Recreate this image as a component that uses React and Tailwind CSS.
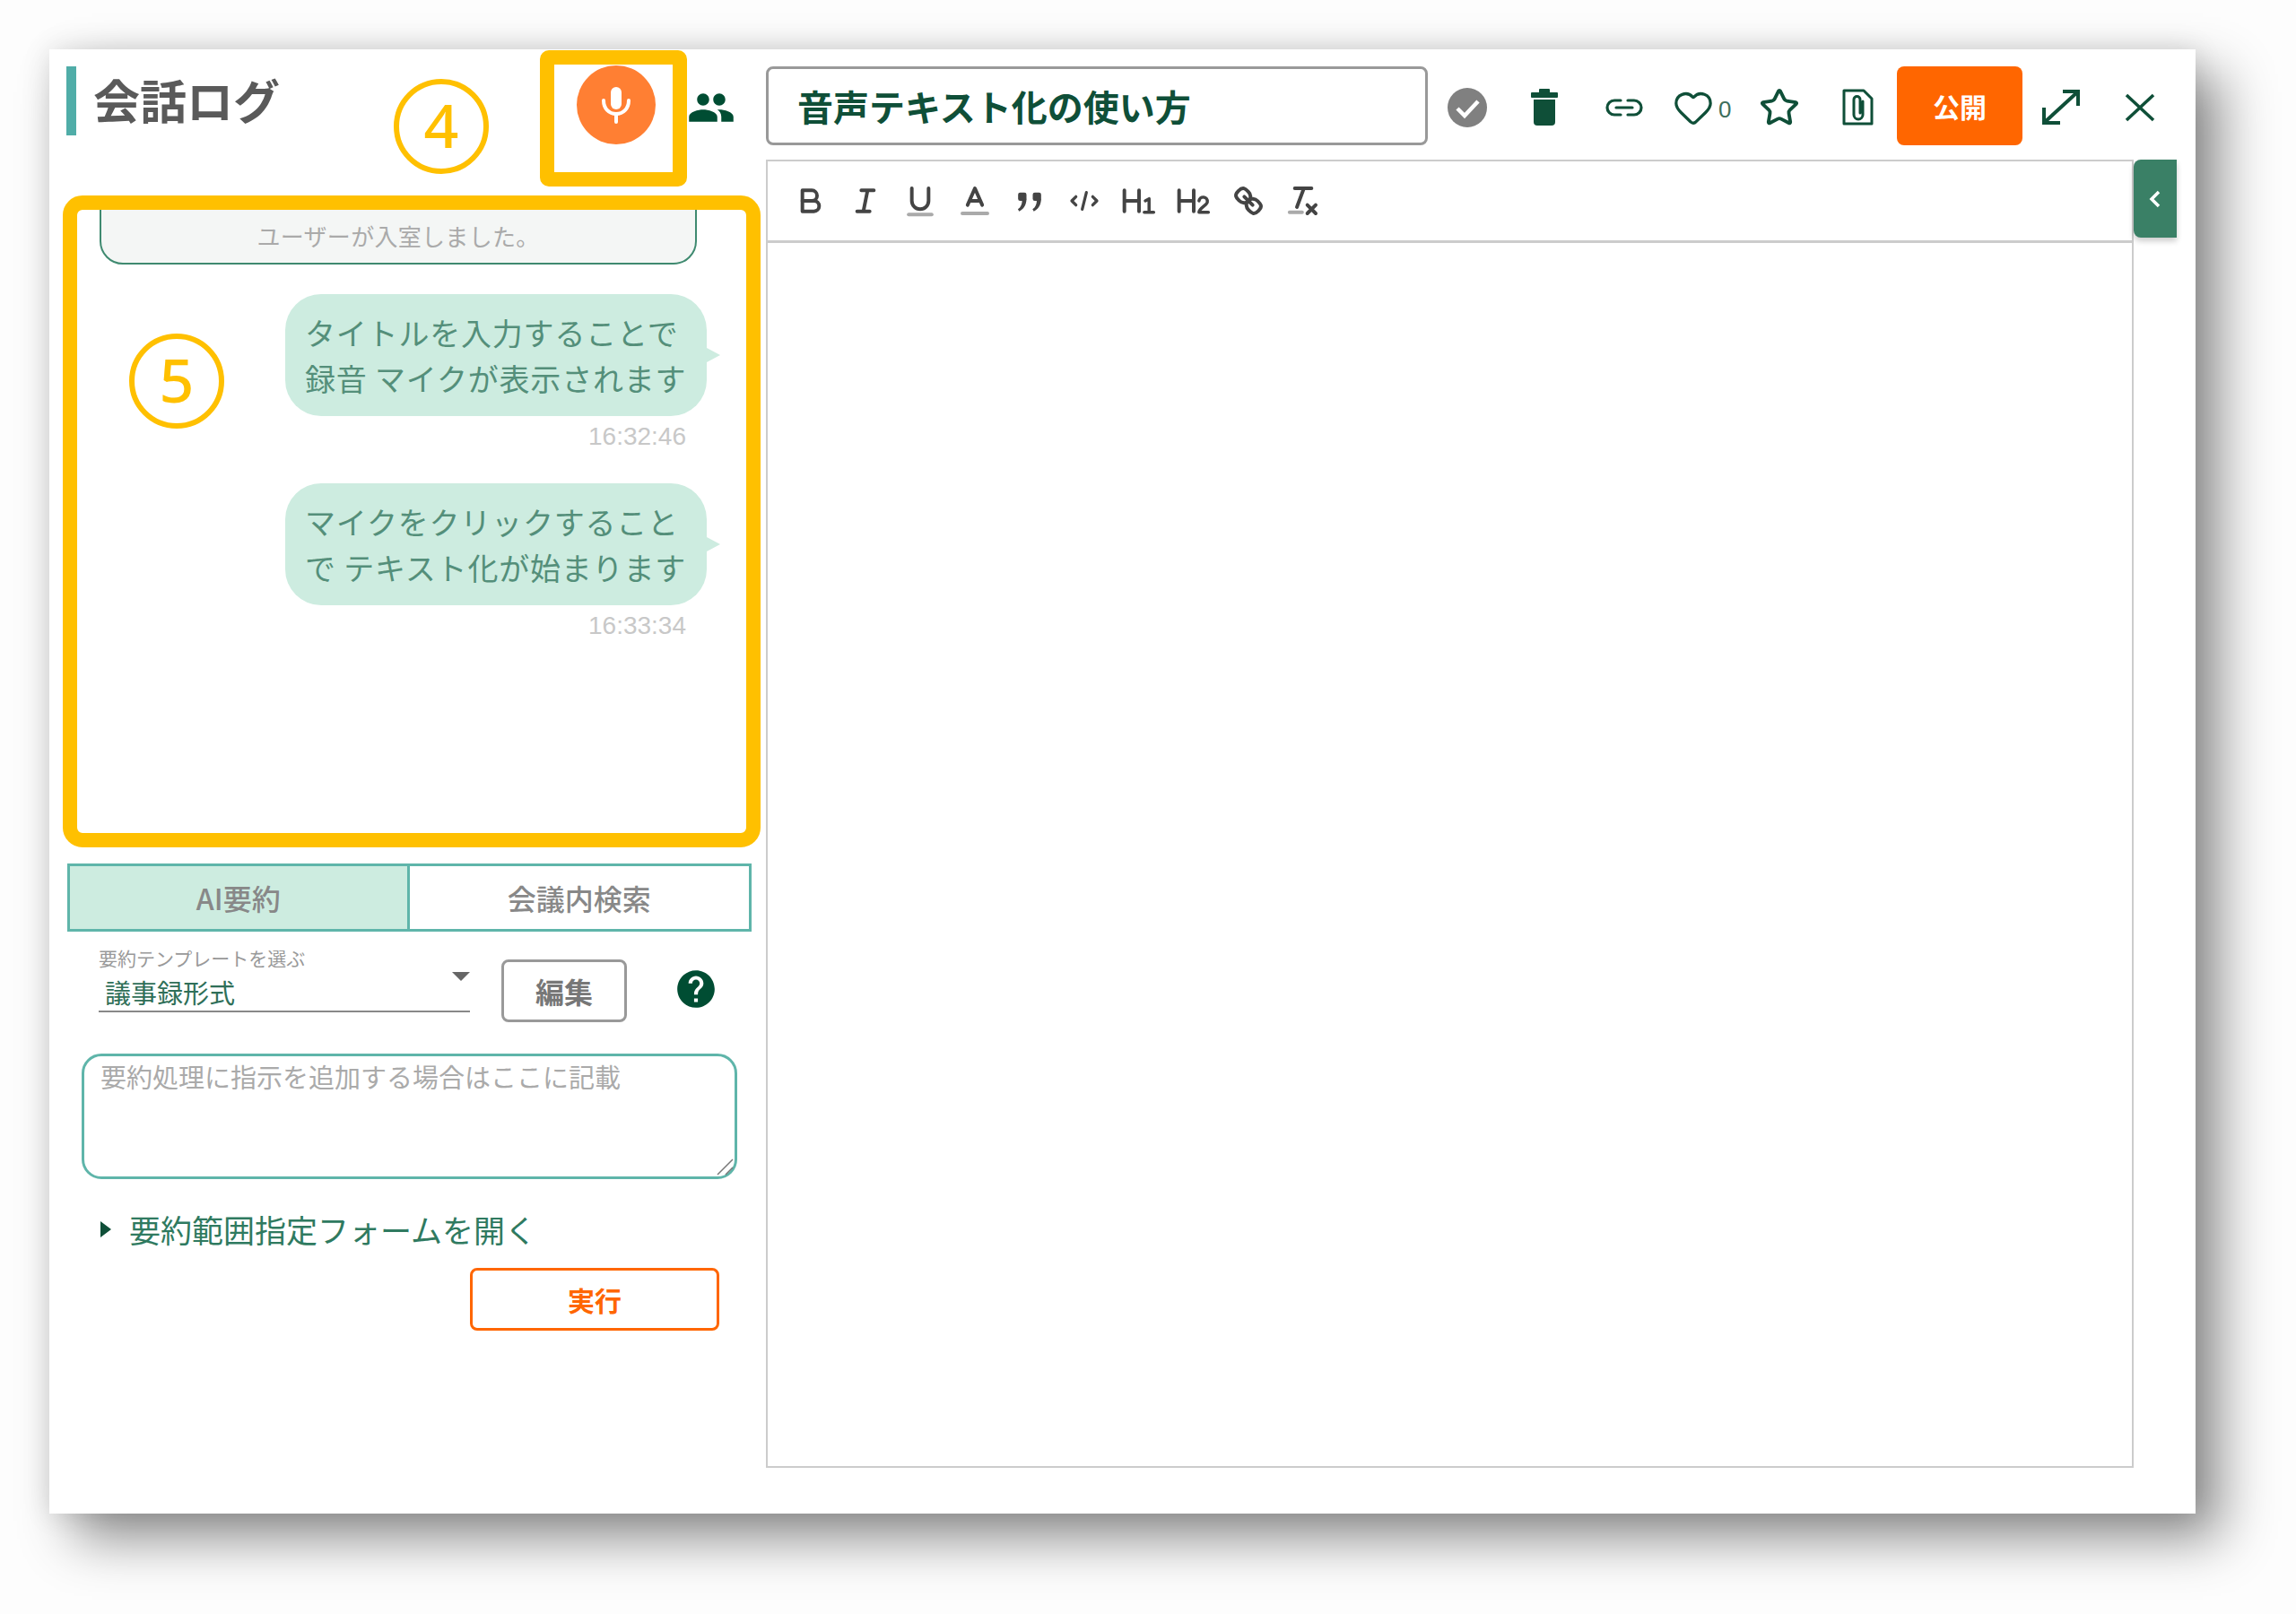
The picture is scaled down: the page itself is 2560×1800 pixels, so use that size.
import React from 'react';
import { Heart, Star } from 'lucide-react';
import { MdPeople, MdHelp } from 'react-icons/md';

const green = '#0f4f38';

const MicIcon = () => (
  <svg width="36" height="42" viewBox="0 0 36 42" fill="none" stroke="#fff" strokeWidth="4" strokeLinecap="round">
    <rect x="12" y="1" width="12" height="25" rx="6" fill="#fff" stroke="none" />
    <path d="M4 16c0 9 6 15 14 15s14-6 14-15" />
    <path d="M18 31v9" />
  </svg>
);

const CheckIcon = () => (
  <svg width="46" height="46" viewBox="0 0 46 46">
    <circle cx="23" cy="23" r="22" fill="#808080" />
    <path d="M12 24l8 8 15-16" fill="none" stroke="#fff" strokeWidth="4.5" />
  </svg>
);

const TrashIcon = () => (
  <svg width="30" height="41" viewBox="0 0 30 41" fill={green}>
    <rect x="9" y="0" width="12" height="6" rx="1" />
    <rect x="0" y="4" width="30" height="6" rx="1" />
    <path d="M3 12h24v25a4 4 0 0 1-4 4H7a4 4 0 0 1-4-4z" />
  </svg>
);

const LinkIcon = () => (
  <svg width="44" height="22" viewBox="0 0 44 22" fill="none" stroke={green} strokeWidth="3.2" strokeLinecap="round">
    <path d="M18 3h-7a8 8 0 0 0 0 16h7" />
    <path d="M26 3h7a8 8 0 0 1 0 16h-7" />
    <path d="M13 11h18" />
  </svg>
);

const DocIcon = () => (
  <svg width="35" height="41" viewBox="0 0 35 41" fill="none" stroke={green} strokeWidth="3">
    <path d="M2 2h22l9 9v28H2z" strokeLinejoin="round" />
    <path d="M23 14v15a5 5 0 0 1-10 0V12a3.5 3.5 0 0 1 7 0v15" strokeLinecap="round" />
  </svg>
);

const ExpandIcon = () => (
  <svg width="44" height="41" viewBox="0 0 44 41" fill="none" stroke={green} strokeWidth="4">
    <path d="M4 37L40 4" />
    <path d="M24 3h17v16" />
    <path d="M3 21v17h18" />
  </svg>
);

const CloseIcon = () => (
  <svg width="34" height="32" viewBox="0 0 34 32" fill="none" stroke={green} strokeWidth="3.6">
    <path d="M2 2l30 28M32 2L2 30" />
  </svg>
);

// toolbar icons on an 18 unit grid
const toolIcons = [
  <g key="b">
    <path d="M5 4h4.5a2.5 2.5 0 0 1 0 5H5z" />
    <path d="M5 9h5.5a2.5 2.5 0 0 1 0 5H5z" />
  </g>,
  <g key="i">
    <path d="M7 4h6M5 14h6M8 14l2-10" />
  </g>,
  <g key="u">
    <path d="M5 3v6a4 4 0 0 0 8 0V3" />
    <path d="M3.5 15.5h11" stroke="#aaa" />
  </g>,
  <g key="a">
    <path d="M5.5 11L9 3l3.5 8M6.4 9h5.2" />
    <path d="M3 15h12" stroke="#aaa" />
  </g>,
  <g key="q" fill="#444" stroke="none">
    <rect x="3.5" y="5" width="4" height="4" rx="1" />
    <rect x="10.5" y="5" width="4" height="4" rx="1" />
    <path d="M7.5 8c0 3-1.5 5-3.5 6l-.6-1c1.500-1 2-2.500 2-4zM14.500 8c0 3-1.500 5-3.500 6l-.6-1c1.500-1 2-2.500 2-4z" />
  </g>,
  <g key="c" strokeWidth="1.4">
    <path d="M5 7L3 9l2 2M13 7l2 2-2 2M10 5l-2 8" />
  </g>,
  <g key="h1">
    <path d="M2 4v10M9 4v10M2 9h7" />
    <path d="M12 9l1.800-1v6.500M11.500 14.500h4.500" strokeWidth="1.500" />
  </g>,
  <g key="h2">
    <path d="M2 4v10M9 4v10M2 9h7" />
    <path d="M11.500 9a2 2 0 0 1 4 .5c0 1.500-4 3-4 5h4.500" strokeWidth="1.500" />
  </g>,
  <g key="l">
    <path d="M7 7l4 4" />
    <path d="M8.900 4.580a3.480 3.480 0 0 1 .36 4.680A3.480 3.480 0 0 1 4.580 8.900C3.190 7.500 2.040 6.400 4.220 4.220S7.500 3.190 8.900 4.580z" />
    <path d="M13.420 9.100a3.480 3.480 0 0 0-4.680-.36 3.480 3.480 0 0 0 .36 4.680c1.390 1.390 2.500 2.540 4.680.36s1.030-3.280-.36-4.680z" />
  </g>,
  <g key="x">
    <path d="M5 3h8M6 12L9.350 3M11 11l4 4M15 11l-4 4" />
    <path d="M2.500 14.500h6" stroke="#aaa" />
  </g>,
];

const Bubble = ({ lines, time }) => (
  <div className="flex flex-col items-end mr-[44px]">
    <div className="relative w-[470px] h-[136px] rounded-[40px] bg-[#cdece0] pl-[22px] py-[17px] text-[34px] leading-[51px] tracking-[0.8px] text-[#548f7a] whitespace-nowrap">
      {lines.map((line) => (
        <div key={line}>{line}</div>
      ))}
      <div className="absolute left-full top-[60px] border-y-[8px] border-y-transparent border-l-[15px] border-l-[#cdece0]" />
    </div>
    <div className="mt-[8px] mr-[23px] text-[28px] leading-[30px] text-[#c8c8c8] font-['Liberation_Sans',sans-serif]">{time}</div>
  </div>
);

const Marker = ({ n }) => (
  <div className="w-[106px] h-[106px] pb-[4px] rounded-full border-[6px] border-[#ffc000] flex items-center justify-center text-[68px] leading-none font-medium text-[#ffc000] font-['Noto_Sans',sans-serif]">
    {n}
  </div>
);

const LeftColumn = () => (
  <div className="w-[799px] shrink-0">
    <div className="h-[163px] flex items-start">
      <div className="ml-[19px] mt-[19px] w-[11px] h-[77px] bg-[#50ada8]" />
      <h1 className="ml-[19px] mt-[26px] w-[206px] text-[52px] leading-[60px] font-bold text-[#5a5a5a] whitespace-nowrap">会話ログ</h1>
      <div className="ml-[129px] mt-[33px]">
        <Marker n="4" />
      </div>
      <div className="ml-[57px] mt-px w-[164px] h-[152px] border-[16px] border-[#ffc000] rounded-[10px] flex justify-center pl-[6px] pt-px">
        <div className="w-[88px] h-[88px] rounded-full bg-[#ff7f33] flex items-center justify-center">
          <MicIcon />
        </div>
      </div>
      <MdPeople size={54} color="#004d33" className="mt-[38px]" />
    </div>

    <div className="relative ml-[15px] w-[778px] h-[727px] border-[16px] border-[#ffc000] rounded-[22px] overflow-hidden">
      <div className="-mt-[30px] ml-[25px] w-[666px] h-[91px] pt-[25px] rounded-[26px] border-2 border-[#3f8a70] bg-[#f4f6f5] flex items-center justify-center text-[26px] tracking-[0.3px] text-[#aaa]">
        ユーザーが入室しました。
      </div>
      <div className="mt-[33px]">
        <Bubble lines={['タイトルを入力することで', '録音 マイクが表示されます']} time="16:32:46" />
      </div>
      <div className="mt-[37px]">
        <Bubble lines={['マイクをクリックすること', 'で テキスト化が始まります']} time="16:33:34" />
      </div>
      <div className="absolute left-[58px] top-[138px]">
        <Marker n="5" />
      </div>
    </div>

    <div className="ml-[20px] mt-[18px] w-[763px] h-[76px] grid grid-cols-2 border-[3px] border-[#5fb5aa] text-[32px] font-medium text-[#888]">
      <div className="bg-[#cdece0] border-r-[3px] border-[#5fb5aa] flex items-center justify-center">AI要約</div>
      <div className="flex items-center justify-center">会議内検索</div>
    </div>

    <div className="flex items-start mt-[20px] ml-[55px]">
      <div className="relative w-[414px] h-[70px] border-b-2 border-[#888]">
        <div className="-mt-[3px] text-[21px] leading-[24px] text-[#999] whitespace-nowrap">要約テンプレートを選ぶ</div>
        <div className="ml-[7px] mt-[10px] text-[29px] leading-[32px] text-[#2f6f58] whitespace-nowrap">議事録形式</div>
        <div className="absolute right-0 top-[25px] border-x-[10px] border-x-transparent border-t-[10px] border-t-[#666]" />
      </div>
      <button className="ml-[35px] mt-[11px] w-[140px] h-[70px] rounded-[8px] border-[3px] border-[#999] bg-white text-[32px] font-bold text-[#777]">編集</button>
      <MdHelp size={50} color="#004d33" className="ml-[52px] mt-[19px]" />
    </div>

    <div className="relative ml-[36px] mt-[35px] w-[731px] h-[140px]">
      <textarea
        placeholder="要約処理に指示を追加する場合はここに記載"
        className="block w-full h-full resize-none rounded-[22px] border-[3px] border-[#5fb5aa] px-[18px] py-[3px] text-[29px] leading-[38px] outline-none placeholder:text-[#aaa]"
      />
      <svg width="20" height="20" viewBox="0 0 20 20" fill="none" stroke="#777" strokeWidth="1.5" className="absolute right-[4px] bottom-[4px]">
        <path d="M2 19L19 2M11 19l8-8" />
      </svg>
    </div>

    <div className="flex items-center ml-[57px] mt-[34px] h-[44px]">
      <div className="border-y-[9px] border-y-transparent border-l-[12px] border-l-[#0f4f38]" />
      <span className="ml-[20px] text-[35px] leading-[44px] text-[#2f7a60] whitespace-nowrap">要約範囲指定フォームを開く</span>
    </div>

    <button className="block ml-[469px] mt-[21px] w-[278px] h-[70px] rounded-[8px] border-[3px] border-[#ff6600] bg-white text-[30px] font-bold text-[#ff6600]">実行</button>
  </div>
);

const RightColumn = () => (
  <div className="w-[1525px] shrink-0 pt-[19px]">
    <div className="flex items-center h-[88px] [&>*]:shrink-0">
      <div className="w-[738px] h-[88px] rounded-[8px] border-[3px] border-[#999] pl-[32px] flex items-center text-[40px] font-bold text-[#0f4f38] whitespace-nowrap">
        音声テキスト化の使い方
      </div>
      <div className="ml-[21px] mt-[3px] flex"><CheckIcon /></div>
      <div className="ml-[48px] mt-[3px] flex"><TrashIcon /></div>
      <div className="ml-[52px] mt-[3px] flex"><LinkIcon /></div>
      <Heart size={46} color={green} strokeWidth={1.7} className="ml-[32px] mt-[3px]" />
      <span className="ml-[5px] mt-[8px] w-[16px] text-[26px] text-[#3d6f5c] font-['Liberation_Sans',sans-serif]">0</span>
      <Star size={46} color={green} strokeWidth={2} className="ml-[29px] mt-[3px]" />
      <div className="ml-[47px] mt-[3px] flex"><DocIcon /></div>
      <button className="ml-[26px] w-[140px] h-[88px] rounded-[8px] bg-[#ff6600] text-[30px] font-bold text-white">公開</button>
      <div className="ml-[21px] mt-[3px] flex"><ExpandIcon /></div>
      <div className="ml-[49px] mt-[3px] flex"><CloseIcon /></div>
    </div>

    <div className="relative mt-[16px] h-[1459px] border-2 border-[#ccc]">
      <div className="h-[91px] border-b-[3px] border-[#ccc] flex items-center pl-[17px]">
        {toolIcons.map((icon) => (
          <div key={icon.key} className="w-[61px] flex justify-center">
            <svg width="42" height="42" viewBox="0 0 18 18" fill="none" stroke="#444" strokeWidth="1.700" strokeLinecap="round" strokeLinejoin="round">
              {icon}
            </svg>
          </div>
        ))}
      </div>
      <div className="absolute left-full ml-[2px] -top-[2px] w-[48px] h-[87px] rounded-l-[8px] bg-[#3a8066] shadow-[0_4px_6px_rgba(0,0,0,0.2)] flex items-center justify-center">
        <svg width="14" height="20" viewBox="0 0 14 20" fill="none" stroke="#fff" strokeWidth="3.500">
          <path d="M11 2L3 10l8 8" />
        </svg>
      </div>
    </div>
  </div>
);

export default function App() {
  return (
    <div className="w-[2560px] h-[1800px] bg-[#fdfdfd] pt-[55px] pl-[55px] overflow-hidden font-['Noto_Sans_CJK_JP',sans-serif]">
      <div className="w-[2393px] h-[1633px] bg-white flex shadow-[28px_28px_56px_rgba(0,0,0,0.44),0_0_30px_rgba(0,0,0,0.12)]">
        <LeftColumn />
        <RightColumn />
      </div>
    </div>
  );
}
